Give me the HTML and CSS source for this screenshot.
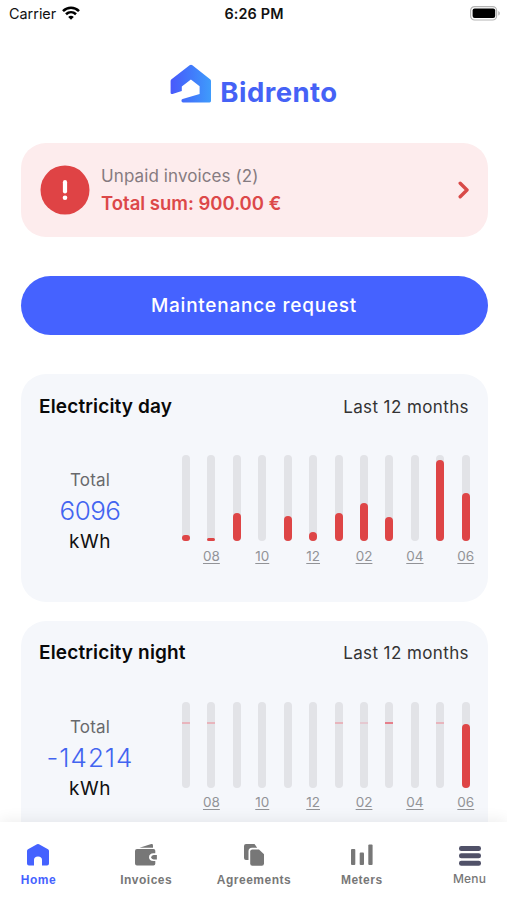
FILE: index.html
```html
<!DOCTYPE html>
<html lang="en">
	<head>
		<meta charset="UTF-8" />
		<meta
			name="viewport"
			content="width=device-width, initial-scale=1.0"
		/>
		<title>Bidrento</title>
		<link rel="stylesheet" href="styles.css">
	</head>

	<body>
		<header class="status-bar">
			<div class="carrier">
				<span class="carrier-name">Carrier</span>
				<svg width="18" height="14" viewBox="0 0 18 14" fill="none" stroke="#000" stroke-width="2.6">
					<path d="M1 5.1C5.6.7 12.400.7 17 5.1" />
					<path d="M4 8.300C6.900 5.600 11.100 5.600 14 8.300" />
					<path d="M9 13.700L6.200 10.900C7.800 9.400 10.200 9.400 11.800 10.900Z" fill="#000" stroke="none" />
				</svg>
			</div>
			<div class="clock">6:26 PM</div>
			<div class="battery">
				<svg width="31" height="15" viewBox="0 0 31 15">
					<rect x=".6" y=".6" width="26" height="13.400" rx="4" fill="#fff" stroke="#b4b4b4" stroke-width="1.200" />
					<rect x="2.600" y="2.400" width="22.600" height="9.700" rx="2" fill="#000" />
					<path d="M28.300 5v4.600c2-.8 2-3.800 0-4.600z" fill="#b4b4b4" />
				</svg>
			</div>
		</header>

		<main class="content">
			<div class="logo">
				<svg width="42" height="39" viewBox="0 0 42 39">
					<defs>
						<linearGradient id="logo-fill" x1="0" y1="0" x2="1" y2="0">
							<stop offset="0" stop-color="#4959fb" />
							<stop offset=".5" stop-color="#4179fb" />
							<stop offset="1" stop-color="#3f9cfc" />
						</linearGradient>
					</defs>
					<path d="M1.200 15.500L19.600 1.200Q21 .2 22.400 1.200L40.400 15.600Q41 16.200 41 17V37Q41 38.400 39.600 38.400H13Q11.500 38.400 11.500 37V36.200Q11.500 35.300 12.600 35L29.600 29.900V22.300L20.900 15.600L11.800 22.500V27L2.500 30Q.6 30.500.6 28.700V17Q.6 16 1.200 15.500Z" fill="url(#logo-fill)" />
				</svg>
				<span class="logo-text">Bidrento</span>
			</div>

			<a class="alert">
				<svg class="alert-icon" width="50" height="50" viewBox="0 0 50 50">
					<circle cx="25" cy="25" r="24.500" fill="#df4345" />
					<path d="M25 17.200V26.500" stroke="#fff" stroke-width="4.200" stroke-linecap="round" />
					<circle cx="25" cy="32.700" r="2.300" fill="#fff" />
				</svg>
				<div class="alert-text">
					<div class="alert-label">Unpaid invoices (2)</div>
					<div class="alert-sum">Total sum: 900.00 €</div>
				</div>
				<svg width="12" height="18" viewBox="0 0 12 18" fill="none" stroke="#d84a48" stroke-width="3.400" stroke-linecap="round" stroke-linejoin="round">
					<path d="M2.200 2.300L9 9L2.200 15.700" />
				</svg>
			</a>

			<button class="request-button">Maintenance request</button>

			<section class="card">
				<div class="card-header">
					<h2>Electricity day</h2>
					<span class="period">Last 12 months</span>
				</div>
				<div class="card-body">
					<div class="total">
						<div class="total-label">Total</div>
						<div class="total-value">6096</div>
						<div class="total-unit">kWh</div>
					</div>
					<div class="chart">
						<div class="month"><div class="track"><div class="fill" style="height: 6px"></div></div></div>
						<div class="month"><div class="track"><div class="fill" style="height: 3px"></div></div><span>08</span></div>
						<div class="month"><div class="track"><div class="fill" style="height: 28px"></div></div></div>
						<div class="month"><div class="track"></div><span>10</span></div>
						<div class="month"><div class="track"><div class="fill" style="height: 25px"></div></div></div>
						<div class="month"><div class="track"><div class="fill" style="height: 9px"></div></div><span>12</span></div>
						<div class="month"><div class="track"><div class="fill" style="height: 28px"></div></div></div>
						<div class="month"><div class="track"><div class="fill" style="height: 38px"></div></div><span>02</span></div>
						<div class="month"><div class="track"><div class="fill" style="height: 24px"></div></div></div>
						<div class="month"><div class="track"></div><span>04</span></div>
						<div class="month"><div class="track"><div class="fill" style="height: 81px"></div></div></div>
						<div class="month"><div class="track"><div class="fill" style="height: 48px"></div></div><span>06</span></div>
					</div>
				</div>
			</section>

			<section class="card">
				<div class="card-header">
					<h2>Electricity night</h2>
					<span class="period">Last 12 months</span>
				</div>
				<div class="card-body">
					<div class="total">
						<div class="total-label">Total</div>
						<div class="total-value negative">-14214</div>
						<div class="total-unit">kWh</div>
					</div>
					<div class="chart">
						<div class="month"><div class="track"><div class="tick"></div></div></div>
						<div class="month"><div class="track"><div class="tick"></div></div><span>08</span></div>
						<div class="month"><div class="track"></div></div>
						<div class="month"><div class="track"></div><span>10</span></div>
						<div class="month"><div class="track"></div></div>
						<div class="month"><div class="track"></div><span>12</span></div>
						<div class="month"><div class="track"><div class="tick"></div></div></div>
						<div class="month"><div class="track"><div class="tick faint"></div></div><span>02</span></div>
						<div class="month"><div class="track"><div class="tick strong"></div></div></div>
						<div class="month"><div class="track"></div><span>04</span></div>
						<div class="month"><div class="track"><div class="tick"></div></div></div>
						<div class="month"><div class="track"><div class="fill" style="height: 64px"></div></div><span>06</span></div>
					</div>
				</div>
			</section>
		</main>

		<nav class="tab-bar">
			<a class="tab active">
				<svg width="24" height="24" viewBox="0 0 24 24" fill="currentColor">
					<path d="M11 1.300Q12 .7 13 1.300L22 6.300Q23 6.900 23 8V20.500Q23 22.500 21 22.500H16V17Q16 13.500 12 13.500T8 17V22.500H3Q1 22.500 1 20.500V8Q1 6.900 2 6.300Z" />
				</svg>
				<span>Home</span>
			</a>
			<a class="tab">
				<svg width="24" height="24" viewBox="0 0 24 24" fill="currentColor">
					<path d="M5.500 4.700L17.300 1Q19 .7 19 2.400V4.700Z" />
					<path d="M3 6H19.500Q21.300 6 21.300 7.800V10.300H19.500Q15 10.600 15 14.200T19.500 18.100H21.300V20.700Q21.300 22.500 19.500 22.500H3Q1 22.500 1 20.500V8Q1 6 3 6Z" />
					<path d="M19.600 12H22.900V16.400H19.600Q17.200 16.200 17.200 14.200T19.600 12Z" />
				</svg>
				<span>Invoices</span>
			</a>
			<a class="tab">
				<svg width="24" height="24" viewBox="0 0 24 24" fill="currentColor">
					<path d="M4 1H12.500L15.200 4.800H10Q6.500 4.800 6.500 8.300V17H4Q2 17 2 15V3Q2 1 4 1Z" />
					<path d="M10.300 6.500H17L22 11.300V20.500Q22 22.700 19.800 22.700H10.300Q8.200 22.700 8.200 20.500V8.600Q8.200 6.500 10.300 6.500Z" />
				</svg>
				<span>Agreements</span>
			</a>
			<a class="tab">
				<svg width="24" height="24" viewBox="0 0 24 24" fill="currentColor">
					<rect x="1" y="6" width="4.300" height="16" rx="1" />
					<rect x="9.700" y="9.500" width="4.300" height="12.500" rx="1" />
					<rect x="18.300" y="1.500" width="4.300" height="20.500" rx="1" />
				</svg>
				<span>Meters</span>
			</a>
			<a class="tab menu">
				<svg width="24" height="24" viewBox="0 0 24 24" fill="#505168">
					<rect x="1" y="3" width="22" height="5" rx="2.300" />
					<rect x="1" y="10.300" width="22" height="5" rx="2.300" />
					<rect x="1" y="17.700" width="22" height="5" rx="2.300" />
				</svg>
				<span>Menu</span>
			</a>
		</nav>
	</body>
</html>
```

FILE: styles.css
```css
* {
	padding: 0;
	margin: 0;
	box-sizing: border-box;
}
body {
	display: flex;
	flex-direction: column;
	height: 900px;
	overflow: hidden;
	background-color: #fff;
	color: #111;
	font-family: Inter, "Liberation Sans", sans-serif;
}
svg {
	display: block;
	flex: none;
}
.status-bar {
	display: grid;
	grid-template-columns: 1fr auto 1fr;
	align-items: center;
	height: 27px;
	padding: 0 6px 0 9px;
	font-size: 14.4px;
	flex: none;
}
.carrier {
	display: flex;
	align-items: center;
	gap: 6px;
}
.carrier svg {
	margin-top: -1px;
}
.clock {
	margin-left: -2px;
	font-weight: 600;
	letter-spacing: 0.15px;
}
.battery {
	display: flex;
	justify-content: flex-end;
}
.content {
	flex: 1;
	min-height: 0;
	overflow: hidden;
	padding: 37px 19.500px 0 20.500px;
}
.logo {
	display: flex;
	justify-content: center;
	gap: 8px;
	height: 39px;
}
.logo-text {
	margin-top: 11px;
	font-size: 27.500px;
	line-height: 34px;
	font-weight: 700;
	letter-spacing: 0.45px;
	color: #4562f6;
}
.alert {
	display: flex;
	align-items: center;
	height: 94px;
	margin-top: 39.500px;
	padding: 0 18px 0 19px;
	border-radius: 25px;
	background-color: #fdeced;
}
.alert-text {
	flex: 1;
	margin-left: 11.500px;
}
.alert-label {
	font-size: 17px;
	line-height: 27px;
	letter-spacing: 0.1px;
	color: #857b80;
}
.alert-sum {
	font-size: 18.500px;
	line-height: 27px;
	font-weight: 600;
	color: #dc4849;
}
.request-button {
	display: block;
	width: 100%;
	height: 59px;
	margin-top: 39px;
	padding-top: 1px;
	border: none;
	border-radius: 30px;
	background-color: #4562ff;
	color: #fff;
	font-family: inherit;
	font-size: 19px;
	font-weight: 500;
	letter-spacing: 0.75px;
}
.card {
	height: 228px;
	margin-top: 39.500px;
	padding: 18px 18.500px;
	border-radius: 25px;
	background-color: #f5f7fb;
}
.card + .card {
	margin-top: 18.500px;
}
.card-header {
	display: flex;
	justify-content: space-between;
	align-items: center;
	height: 28px;
}
.card-header h2 {
	font-size: 19px;
	font-weight: 600;
	letter-spacing: 0.15px;
	color: #090909;
}
.period {
	padding-top: 1px;
	font-size: 17px;
	letter-spacing: 0.4px;
	color: #333;
}
.card-body {
	display: flex;
	justify-content: space-between;
	margin-top: 35px;
	margin-right: -9.500px;
}
.total {
	width: 102px;
	margin-top: 12px;
	text-align: center;
}
.total-label {
	font-size: 17px;
	line-height: 26px;
	letter-spacing: 0.2px;
	color: #68696c;
}
.total-value {
	font-size: 26px;
	line-height: 36px;
	font-weight: 300;
	letter-spacing: -0.5px;
	color: #4264f0;
}
.total-value.negative {
	letter-spacing: 1px;
}
.total-unit {
	font-size: 19px;
	line-height: 26px;
	letter-spacing: 0.6px;
}
.chart {
	display: grid;
	grid-template-columns: repeat(12, 25.450px);
}
.month {
	display: flex;
	flex-direction: column;
	align-items: center;
}
.month span {
	margin-top: 4.500px;
	font-size: 13.500px;
	line-height: 20px;
	color: #929397;
	text-decoration: underline;
	text-underline-offset: 2px;
}
.track {
	display: flex;
	flex-direction: column;
	justify-content: flex-end;
	width: 8px;
	height: 86px;
	border-radius: 4px;
	background-color: #e2e3e7;
}
.fill {
	border-radius: 4px;
	background-color: #de4546;
}
.tick {
	height: 2px;
	margin-bottom: 63.500px;
	background-color: #e8b5bd;
}
.tick.faint {
	background-color: #e5c9d1;
}
.tick.strong {
	background-color: #e67f8b;
}
.tab-bar {
	display: grid;
	grid-template-columns: repeat(5, 107.800px);
	justify-content: center;
	flex: none;
	height: 78px;
	padding-top: 21px;
	padding-left: 1px;
	background-color: #fff;
	box-shadow: 0 -2px 14px rgba(0, 0, 0, 0.07);
	position: relative;
}
.tab {
	display: flex;
	flex-direction: column;
	align-items: center;
	gap: 5px;
	font-family: "Liberation Sans", sans-serif;
	font-size: 12px;
	line-height: 16px;
	font-weight: 700;
	letter-spacing: 0.5px;
	color: #777;
}
.active {
	color: #4562ff;
}
.menu {
	gap: 4px;
	font-family: Inter, sans-serif;
	font-weight: 500;
	letter-spacing: 0.2px;
}
```
